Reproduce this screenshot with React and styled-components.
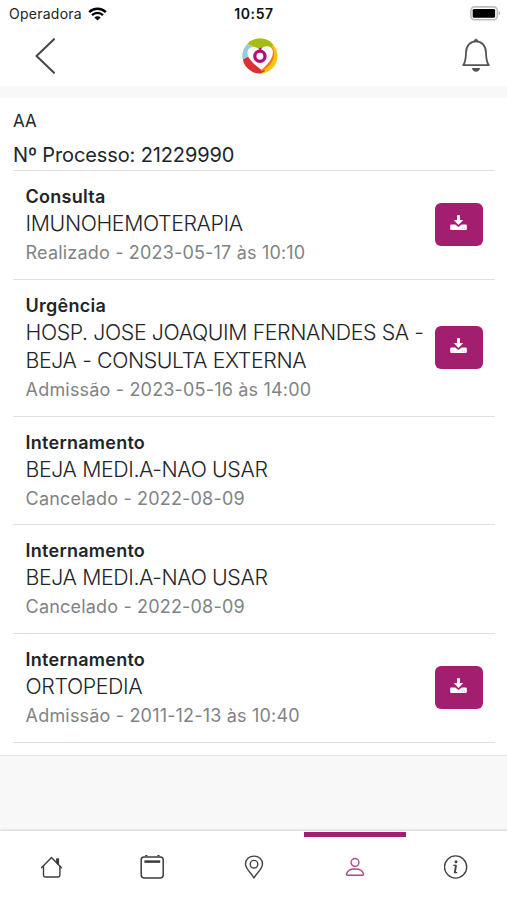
import React from "react";
import styled, { createGlobalStyle } from "styled-components";

const episodes = [
  {
    type: "Consulta",
    name: "IMUNOHEMOTERAPIA",
    info: "Realizado - 2023-05-17 às 10:10",
    file: true,
  },
  {
    type: "Urgência",
    name: "HOSP. JOSE JOAQUIM FERNANDES SA - BEJA - CONSULTA EXTERNA",
    info: "Admissão - 2023-05-16 às 14:00",
    file: true,
  },
  {
    type: "Internamento",
    name: "BEJA MEDI.A-NAO USAR",
    info: "Cancelado - 2022-08-09",
  },
  {
    type: "Internamento",
    name: "BEJA MEDI.A-NAO USAR",
    info: "Cancelado - 2022-08-09",
  },
  {
    type: "Internamento",
    name: "ORTOPEDIA",
    info: "Admissão - 2011-12-13 às 10:40",
    file: true,
  },
];

function WifiIcon() {
  return (
    <svg width="19" height="14" viewBox="0 0 19 14" fill="none" stroke="#000">
      <path d="M1.2 5.1C5.8 0.6 13.2 0.6 17.8 5.1" strokeWidth="2.5" />
      <path d="M4 8.1C7.1 5.1 11.9 5.1 15 8.1" strokeWidth="2.3" />
      <path d="M9.5 13.6L6.4 10.5C8.2 8.9 10.8 8.9 12.6 10.5Z" fill="#000" stroke="none" />
    </svg>
  );
}

function BatteryIcon() {
  return (
    <svg width="31" height="15" viewBox="0 0 31 15">
      <rect x="0.9" y="0.9" width="26.4" height="12.8" rx="3.6" fill="#fff" stroke="#bdbdbd" strokeWidth="1.6" />
      <rect x="2.7" y="2.9" width="22.4" height="8.9" rx="1.4" fill="#000" />
      <path d="M28.7 5.2C30.6 5.8 30.6 8.8 28.7 9.4Z" fill="#b0b0b0" />
    </svg>
  );
}

function BackIcon() {
  return (
    <svg width="22" height="38" viewBox="0 0 22 38" fill="none" stroke="#4a4a4a" strokeWidth="2.1" strokeLinecap="round" strokeLinejoin="round">
      <path d="M19 2.2L1.5 19L19 35.8" />
    </svg>
  );
}

function Logo() {
  return (
    <svg width="36" height="36" viewBox="0 0 36 36">
      <defs>
        <clipPath id="logo-disc">
          <circle cx="18" cy="18" r="17.5" />
        </clipPath>
      </defs>
      <g clipPath="url(#logo-disc)">
        <rect width="36" height="36" fill="#fdc20c" />
        <path d="M0 0V24L10 20L18 12L4.5 5.5Z" fill="#91cbe6" />
        <path d="M4.5 5.5C9 -2 26 -3 31.5 5.5L29 10.5L18 13C14 9 10 7 4.5 5.5Z" fill="#a3bd14" />
        <path d="M0 22L6 19L20 28L23 33L18 36H0Z" fill="#dc2f34" />
        <path d="M30 9C35.5 19 29 28 19.5 33.5L17 28Z" fill="#ee7b1a" />
        <path d="M19.5 31.8C13.5 27.5 6 21.5 5.5 15.2C5.2 8.6 13.5 6.8 18 12.3C21 7.5 28.2 6.8 30.3 11.2C33.2 18.5 25 27 19.5 31.8Z" fill="#fff" />
      </g>
      <circle cx="17.9" cy="18.3" r="5.1" fill="#fff" stroke="#b0107d" strokeWidth="3.3" />
      <path d="M17.2 10.3L19.4 9.4V14H17.2Z" fill="#b0107d" />
    </svg>
  );
}

function BellIcon() {
  return (
    <svg width="30" height="36" viewBox="0 0 30 36" fill="none" stroke="#555" strokeWidth="1.8" strokeLinejoin="round">
      <path d="M2.2 27.1C5 23.5 4.8 19.5 5 14.5C5.2 7.8 9.3 3.4 15 3.4C20.7 3.4 24.8 7.8 25 14.5C25.2 19.5 25 23.5 27.8 27.1Z" />
      <path d="M13.2 3C13.2 0.6 16.8 0.6 16.8 3Z" fill="#555" strokeWidth="0.8" />
      <path d="M11 30H19C18.6 35 11.4 35 11 30Z" fill="#555" stroke="none" />
    </svg>
  );
}

function DownloadIcon() {
  return (
    <svg width="17" height="16" viewBox="0 0 17 16" fill="#fff">
      <path d="M7 0.2H10V5H13.2L8.5 9.9L3.8 5H7Z" />
      <path d="M1.2 9.6H5.3L8.5 12.1L11.7 9.6H15.8Q16.8 9.6 16.8 10.6V14.1Q16.8 15.1 15.8 15.1H1.2Q0.2 15.1 0.2 14.1V10.6Q0.2 9.6 1.2 9.6Z" />
      <path d="M11.7 13.2H12.7M13.8 13.2H14.8" stroke="#a21f70" strokeWidth="0.5" />
    </svg>
  );
}

function HomeIcon() {
  return (
    <svg width="24" height="24" viewBox="0 0 24 24" fill="none" stroke="#3c3c3c" strokeWidth="1.4" strokeLinecap="round" strokeLinejoin="round">
      <path d="M2.5 12.8L12.5 2.6L22.5 12.8" />
      <path d="M4.5 11.3V20.3Q4.5 22 6.2 22H19.2Q20.9 22 20.9 20.3V11.3" />
      <path d="M17.8 7.5V4H19.4V9.2Z" fill="#3c3c3c" />
    </svg>
  );
}

function CalendarIcon() {
  return (
    <svg width="24" height="24" viewBox="0 0 24 24" fill="none" stroke="#3c3c3c" strokeWidth="1.5">
      <rect x="1.2" y="2" width="22" height="20.9" rx="2.8" />
      <path d="M5.2 0.5H7.4M17.4 0.5H19.6" strokeWidth="1.4" />
      <path d="M4.4 6.6H20.2" strokeWidth="2.5" />
    </svg>
  );
}

function PinIcon() {
  return (
    <svg width="20" height="24" viewBox="0 0 20 24" fill="none" stroke="#444" strokeWidth="1.4" strokeLinejoin="round">
      <path d="M10 23C8 18.5 1.5 14.2 1.5 9C1.5 4.4 5.2 1.1 10 1.1C14.8 1.1 18.5 4.4 18.5 9C18.5 14.2 12 18.5 10 23Z" />
      <circle cx="10" cy="9.2" r="3.8" />
    </svg>
  );
}

function UserIcon() {
  return (
    <svg width="20" height="24" viewBox="0 0 20 24" fill="none" stroke="#b2458c" strokeWidth="1.4">
      <circle cx="10" cy="7.4" r="3.9" />
      <path d="M2.4 20.3Q1.3 20.3 1.5 19C2.2 15.5 5.7 14 10 14C14.3 14 17.8 15.5 18.5 19Q18.7 20.3 17.6 20.3Z" />
    </svg>
  );
}

function InfoIcon() {
  return (
    <svg width="24" height="24" viewBox="0 0 24 24" fill="none" stroke="#444" strokeWidth="1.4">
      <circle cx="11.6" cy="12" r="11.1" />
      <circle cx="12" cy="6.7" r="1.5" fill="#444" stroke="none" />
      <path d="M9.3 10.3H12.2M10.3 17.7H13.2" strokeWidth="1.2" />
      <path d="M12 10L10.8 18" strokeWidth="1.9" />
    </svg>
  );
}

function Episode({ type, name, info, file }) {
  return (
    <StyledEpisode>
      <div className="details">
        <EpisodeType>{type}</EpisodeType>
        <EpisodeName>{name}</EpisodeName>
        <EpisodeInfo>{info}</EpisodeInfo>
      </div>
      {file && (
        <DownloadButton aria-label="Download">
          <DownloadIcon />
        </DownloadButton>
      )}
    </StyledEpisode>
  );
}

function App() {
  return (
    <Screen>
      <GlobalStyle />
      <StatusBar>
        <div className="carrier">
          Operadora
          <WifiIcon />
        </div>
        <div className="time">10:57</div>
        <div className="battery">
          <BatteryIcon />
        </div>
      </StatusBar>
      <Header>
        <BackIcon />
        <Logo />
        <BellIcon />
      </Header>
      <Content>
        <Patient>AA</Patient>
        <Process>Nº Processo: 21229990</Process>
        {episodes.map((episode, i) => (
          <Episode key={i} {...episode} />
        ))}
      </Content>
      <TabBar>
        <Tab>
          <HomeIcon />
        </Tab>
        <Tab>
          <CalendarIcon />
        </Tab>
        <Tab>
          <PinIcon />
        </Tab>
        <Tab $active>
          <UserIcon />
        </Tab>
        <Tab>
          <InfoIcon />
        </Tab>
      </TabBar>
    </Screen>
  );
}

const GlobalStyle = createGlobalStyle`
  * {
    box-sizing: border-box;
  }

  body {
    margin: 0;
    background-color: #f8f8f8;
    font-family: Inter, "Liberation Sans", sans-serif;
    color: #212529;
  }

  svg {
    display: block;
    flex-shrink: 0;
  }
`;

const Screen = styled.div`
  display: flex;
  flex-direction: column;
  width: 507px;
  height: 900px;
  overflow: hidden;
  background-color: #f8f8f8;
`;

const StatusBar = styled.div`
  display: grid;
  grid-template-columns: 1fr auto 1fr;
  align-items: center;
  height: 27px;
  padding: 0 6px 0 9px;
  background-color: #fff;
  font-size: 14px;
  line-height: 20px;

  .carrier {
    display: flex;
    align-items: center;
    gap: 6px;
    color: #222;
    letter-spacing: 0.25px;
  }

  .time {
    color: #111;
    font-weight: 600;
    letter-spacing: 0.6px;
    margin-left: -2px;
  }

  .battery {
    display: flex;
    justify-content: flex-end;
  }
`;

const Header = styled.div`
  display: flex;
  align-items: center;
  justify-content: space-between;
  height: 59px;
  padding: 0 16px 2px 35px;
  background-color: #fff;

  svg:nth-child(2) {
    margin-left: 1px;
  }
`;

const Content = styled.div`
  margin-top: 12px;
  height: 658px;
  padding: 9px 12px 0 13px;
  background-color: #fff;
  border-bottom: 1px solid #e4e4e4;
`;

const Patient = styled.div`
  font-size: 17px;
  line-height: 28px;
`;

const Process = styled.div`
  padding: 6px 0 1px;
  font-size: 20px;
  line-height: 28px;
  letter-spacing: -0.12px;
  border-bottom: 1px solid #dee2e6;
`;

const StyledEpisode = styled.div`
  display: flex;
  align-items: center;
  padding: 13px 12px 11.8px 12.6px;
  border-bottom: 1px solid #dee0e2;

  .details {
    flex: 1;
    min-width: 0;
  }
`;

const EpisodeType = styled.div`
  font-size: 18px;
  font-weight: 600;
  line-height: 25px;
  letter-spacing: 0.25px;
`;

const EpisodeName = styled.div`
  font-size: 21.3px;
  font-weight: 300;
  line-height: 28px;
  letter-spacing: -0.38px;
`;

const EpisodeInfo = styled.div`
  margin-top: 2px;
  font-size: 18px;
  font-weight: 400;
  line-height: 28px;
  letter-spacing: 0.18px;
  color: #7f8386;
`;

const DownloadButton = styled.button`
  display: flex;
  align-items: center;
  justify-content: center;
  flex-shrink: 0;
  width: 48px;
  height: 43px;
  margin-bottom: 2px;
  padding: 0 1px 3px 0;
  border: 0;
  border-radius: 6px;
  background-color: #a21f70;
`;

const TabBar = styled.div`
  display: flex;
  height: 69px;
  margin-top: auto;
  background-color: #fff;
  box-shadow: 0 -1px 2px rgba(0, 0, 0, 0.16);
`;

const Tab = styled.div`
  display: flex;
  flex: 1;
  justify-content: center;
  padding-top: 18px;
  margin-top: 1px;
  border-top: 5px solid ${({ $active }) => ($active ? "#a21f70" : "transparent")};
`;

export default App;
